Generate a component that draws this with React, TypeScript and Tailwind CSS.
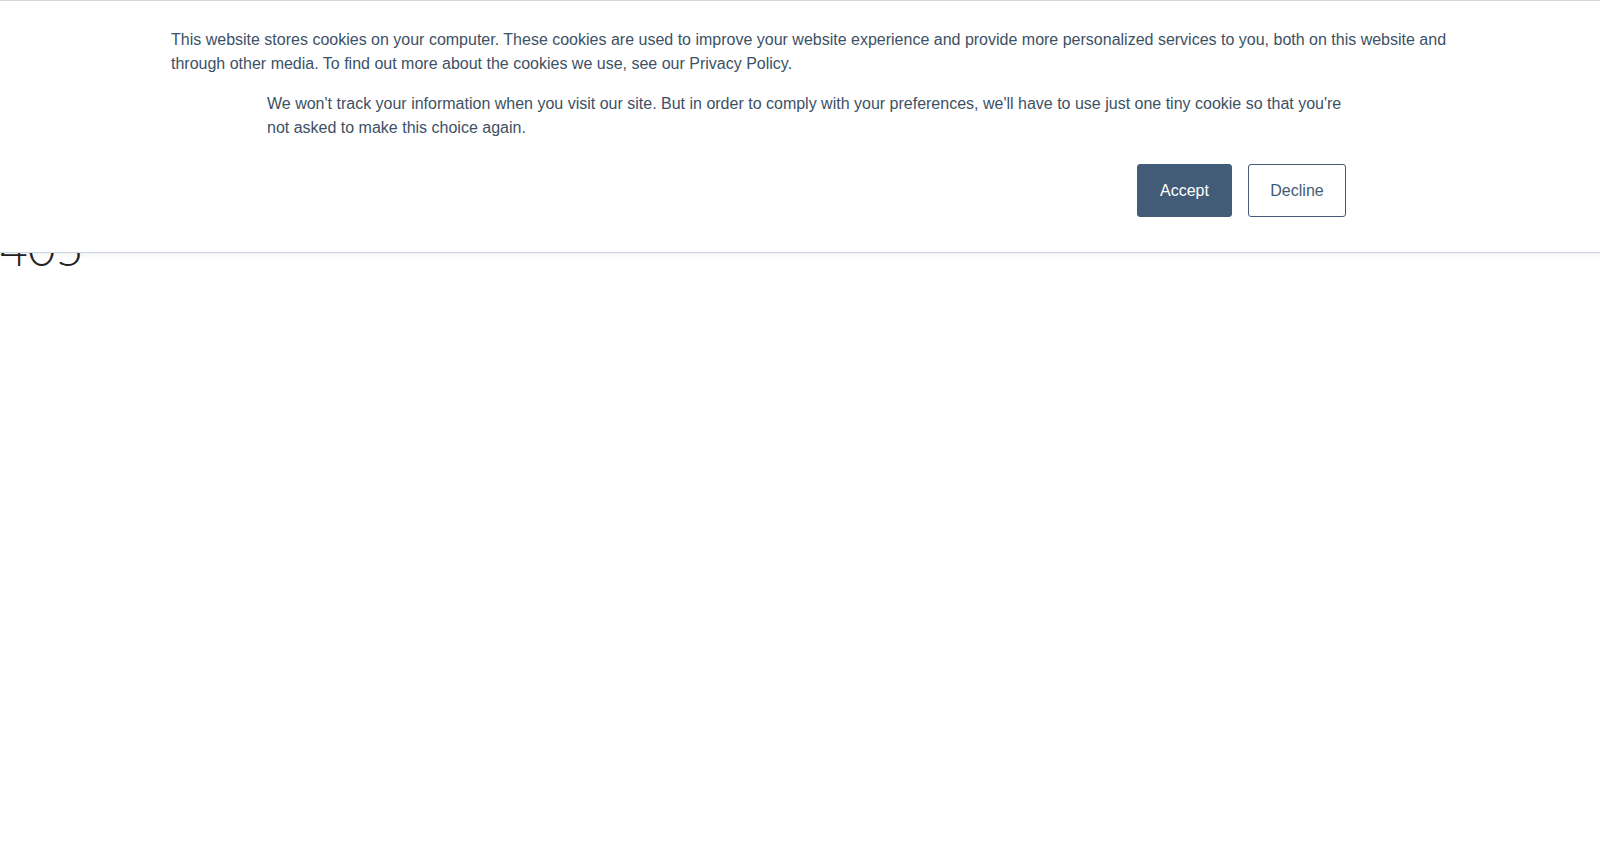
import React from "react";

export default function App() {
  return (
    <div className="relative min-h-[866px] w-full bg-white" style={{ fontFamily: "'Liberation Sans', Arial, sans-serif" }}>
      <main className="pt-[224px]">
        <h1 className="m-0 text-[48px] leading-none font-light text-[#222] tracking-[0px]" style={{ fontFamily: "Lato, 'Open Sans', sans-serif" }}>
          405
        </h1>
      </main>

      <div className="absolute left-0 top-0 z-10 w-full border-t border-b border-t-[#cfd6de] border-b-[#cbd6e2] bg-white shadow-[0_1px_5px_0_rgba(0,0,0,0.08)]">
        <div className="pt-[27px] pb-[35px]">
          <p className="m-0 ml-[171px] w-[1285px] text-[16px] leading-[24px] text-[#3d5166]">
            This website stores cookies on your computer. These cookies are used to improve your website experience and provide more personalized services to you, both on this website and through other media. To find out more about the cookies we use, see our Privacy Policy.
          </p>
          <div className="ml-[267px] w-[1079px]">
            <p className="m-0 mt-[16px] text-[16px] leading-[24px] text-[#3d5166]">
              We won't track your information when you visit our site. But in order to comply with your preferences, we'll have to use just one tiny cookie so that you're not asked to make this choice again.
            </p>
            <div className="mt-[24px] flex justify-end gap-[16px]">
              <button className="h-[53px] w-[95px] rounded-[3px] border border-[#425b76] bg-[#425b76] text-[16px] text-white">
                Accept
              </button>
              <button className="h-[53px] w-[98px] rounded-[3px] border border-[#425b76] bg-white text-[16px] text-[#425b76]">
                Decline
              </button>
            </div>
          </div>
        </div>
      </div>
    </div>
  );
}
